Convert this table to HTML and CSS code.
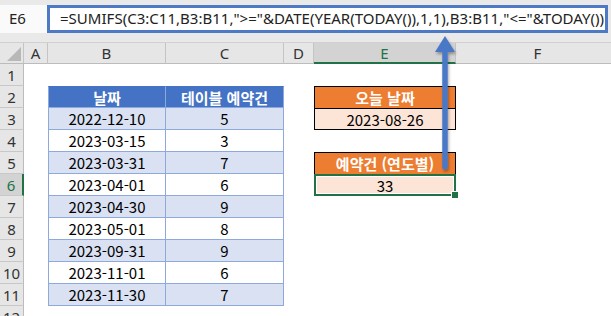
FILE: index.html
```html
<!DOCTYPE html>
<html lang="ko">
<head>
<meta charset="utf-8">
<link rel="stylesheet" href="styles.css">
</head>
<body>
<div class="app">
  <div class="fbar">
    <div class="namebox">E6</div>
    <div class="formula">=SUMIFS(C3:C11,B3:B11,"&gt;="&amp;DATE(YEAR(TODAY()),1,1),B3:B11,"&lt;="&amp;TODAY())</div>
  </div>
  <div class="sheet">
    <div class="ch corner"><span class="tri"></span></div>
    <div class="ch">A</div><div class="ch">B</div><div class="ch">C</div><div class="ch">D</div><div class="ch sel">E</div><div class="ch">F</div>

    <div class="rh">1</div><div></div><div></div><div></div><div></div><div></div><div></div>

    <div class="rh">2</div><div></div><div class="t th tl">날짜</div><div class="t th">테이블 예약건</div><div></div><div class="o oh">오늘 날짜</div><div></div>
    <div class="rh">3</div><div></div><div class="t odd tl">2022-12-10</div><div class="t odd">5</div><div></div><div class="o ov">2023-08-26</div><div></div>
    <div class="rh">4</div><div></div><div class="t tl">2023-03-15</div><div class="t">3</div><div></div><div></div><div></div>
    <div class="rh">5</div><div></div><div class="t odd tl">2023-03-31</div><div class="t odd">7</div><div></div><div class="o oh">예약건 (연도별)</div><div></div>
    <div class="rh rsel">6</div><div></div><div class="t tl">2023-04-01</div><div class="t">6</div><div></div><div class="o ov active">33<span class="handle"></span></div><div></div>
    <div class="rh">7</div><div></div><div class="t odd tl">2023-04-30</div><div class="t odd">9</div><div></div><div></div><div></div>
    <div class="rh">8</div><div></div><div class="t tl">2023-05-01</div><div class="t">8</div><div></div><div></div><div></div>
    <div class="rh">9</div><div></div><div class="t odd tl">2023-09-31</div><div class="t odd">9</div><div></div><div></div><div></div>
    <div class="rh">10</div><div></div><div class="t tl">2023-11-01</div><div class="t">6</div><div></div><div></div><div></div>
    <div class="rh">11</div><div></div><div class="t odd tl">2023-11-30</div><div class="t odd">7</div><div></div><div></div><div></div>
    <div class="rh">12</div><div></div><div></div><div></div><div></div><div></div><div></div>
  </div>
  <svg class="arrow" width="40" height="150" viewBox="0 0 40 150">
    <defs>
      <filter id="sh" x="-50%" y="-20%" width="200%" height="140%">
        <feGaussianBlur in="SourceAlpha" stdDeviation="1.5"/>
        <feOffset dx="1" dy="2" result="b"/>
        <feComponentTransfer><feFuncA type="linear" slope="0.35"/></feComponentTransfer>
        <feMerge><feMergeNode/><feMergeNode in="SourceGraphic"/></feMerge>
      </filter>
    </defs>
    <g filter="url(#sh)">
      <line x1="20" y1="14" x2="20" y2="132" stroke="#4a78c6" stroke-width="5.5" stroke-linecap="round"/>
      <polygon points="20,1 30,17 10,17" fill="#4a78c6"/>
    </g>
  </svg>
</div>
</body>
</html>
```
FILE: styles.css
```css
html, body { margin: 0; padding: 0; background: #fff; }
.app { position: relative; width: 611px; height: 316px; overflow: hidden; background: #fff; }

.fbar {
  height: 43px; box-sizing: border-box; background: #e9e9e9;
  display: flex; align-items: flex-start; padding-top: 5px;
  border-bottom: 1px solid #d0d0d0;
}
.namebox {
  width: 47px; height: 28px; box-sizing: border-box; background: #fafafa;
  font: 15px "Noto Sans", sans-serif; color: #222; padding-left: 9px; line-height: 27px;
}
.formula {
  width: 561px; height: 28px; box-sizing: border-box; background: #fff;
  border: 3px solid #4d79c5; padding-left: 10px;
  font: 15px "Noto Sans", sans-serif; color: #222; line-height: 21px; white-space: nowrap;
  letter-spacing: 0.02px;
}

.sheet {
  display: grid;
  grid-template-columns: 24px 24px 118px 118px 30px 142px 164px;
  grid-template-rows: 21px repeat(12, 22px);
  font: 15px "Noto Sans CJK KR", sans-serif; color: #000;
}
.sheet > div { box-sizing: border-box; }

.ch {
  background: #e6e6e6; border-right: 1px solid #c4c4c4; border-bottom: 1px solid #bcbcbc;
  display: flex; align-items: center; justify-content: center;
  font: 15px "Noto Sans", sans-serif; color: #333;
}
.ch.sel { background: #d3d3d3; border-bottom: 2px solid #217346; color: #217346; }
.corner { position: relative; }
.tri {
  position: absolute; right: 2px; bottom: 2px; width: 0; height: 0;
  border-left: 14px solid transparent; border-bottom: 14px solid #b8b8b8;
}
.rh {
  background: #e6e6e6; border-right: 1px solid #bcbcbc; border-bottom: 1px solid #c8c8c8;
  display: flex; align-items: center; justify-content: center;
  font: 15px "Noto Sans", sans-serif; color: #333;
}
.rh.rsel { background: #d3d3d3; border-right: 2px solid #217346; color: #217346; }

.t {
  display: flex; align-items: center; justify-content: center;
  border-right: 1px solid #8eaadb; border-bottom: 1px solid #8eaadb; background: #fff;
}
.t.tl { border-left: 1px solid #8eaadb; }
.t.odd { background: #d9e1f2; }
.t.th { background: #4472c4; color: #fff; font-weight: bold; border-top: 1px solid #4472c4; }

.o {
  display: flex; align-items: center; justify-content: center;
  border: 1px solid #000;
}
.o.oh { background: #ed7d31; color: #fff; font-weight: bold; border-bottom: none; }
.o.ov { background: #fce4d6; }
.o.active { position: relative; border: 2px solid #217346; box-shadow: inset 0 0 0 1px #fff; }
.handle {
  position: absolute; right: -5px; bottom: -5px; width: 6px; height: 6px;
  background: #217346; border: 1px solid #fff;
}

.arrow { position: absolute; left: 425px; top: 35px; }
```
